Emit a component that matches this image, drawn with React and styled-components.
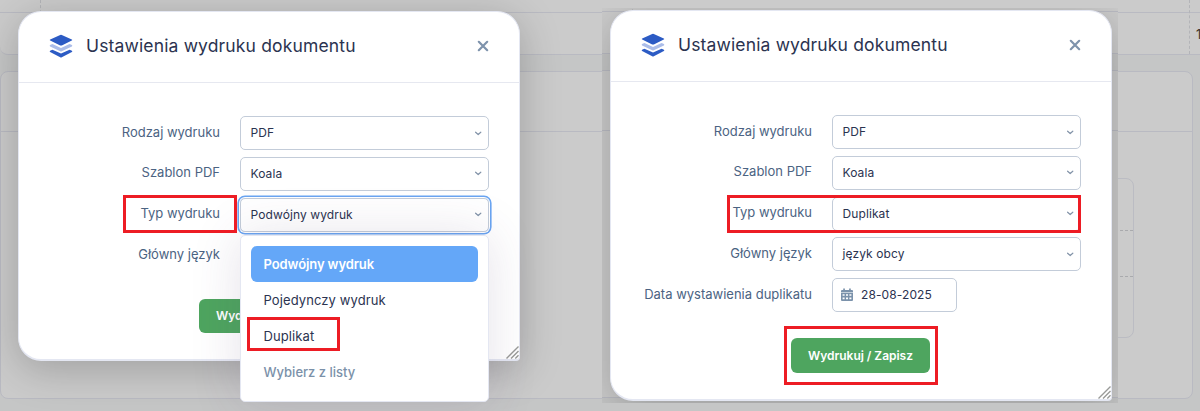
import styled, { createGlobalStyle, css } from "styled-components";

const GlobalStyle = createGlobalStyle`
  * { box-sizing: border-box; }
  body {
    margin: 0;
    overflow: hidden;
    font-family: Inter, "Liberation Sans", sans-serif;
    font-size: 13px;
    color: #2b3350;
  }
`;

const LayersIcon = () => (
  <svg width="24" height="24" viewBox="0 0 24 24">
    <path d="M11.2 .9Q12 .5 12.8 .9L22.8 5.4Q23.8 5.9 22.8 6.4L12.8 11.4Q12 11.8 11.2 11.4L1.2 6.4Q.2 5.9 1.2 5.4Z" fill="#2c5bc4" />
    <path d="M1.1 12.4Q.2 11.7 1.1 11L2.8 10.2Q3.4 10 4 10.3L12 14L20 10.3Q20.6 10 21.2 10.2L22.9 11Q23.8 11.7 22.9 12.4L12.8 17.3Q12 17.7 11.2 17.3Z" fill="#abbde9" />
    <path d="M1.1 18.1Q.2 17.4 1.1 16.7L2.8 15.9Q3.4 15.7 4 16L12 19.6L20 16Q20.6 15.7 21.2 15.9L22.9 16.7Q23.8 17.4 22.9 18.1L12.8 23.2Q12 23.6 11.2 23.2Z" fill="#2c5bc4" />
  </svg>
);

const CloseIcon = () => (
  <svg width="12" height="12" viewBox="0 0 12 12" fill="none" stroke="#7e93ac" strokeWidth="2.2" strokeLinecap="round">
    <path d="M1.8 1.8L10.2 10.2M10.2 1.8L1.8 10.2" />
  </svg>
);

const ChevronIcon = () => (
  <svg width="8" height="6" viewBox="0 0 8 6" fill="none" stroke="#8293a8" strokeWidth="1.2" strokeLinecap="round" strokeLinejoin="round">
    <path d="M1.6 2.2L4.2 4.5L6.8 2.2" />
  </svg>
);

const CalendarIcon = () => (
  <svg width="12" height="14" viewBox="0 0 12 14">
    <path d="M2.2.5h1.7v1.5h4.2V.5h1.7v1.5H11a1 1 0 0 1 1 1v1.3H0V3a1 1 0 0 1 1-1h1.2z" fill="#7b92ab" />
    <path fillRule="evenodd" d="M0 4.8h12v7.2a1 1 0 0 1-1 1H1a1 1 0 0 1-1-1zM1.6 6.2v1.6h2V6.2zM5 6.2v1.6h2V6.2zM8.4 6.2v1.6h2V6.2zM1.6 9.6v1.6h2V9.6zM5 9.6v1.6h2V9.6zM8.4 9.6v1.6h2V9.6z" fill="#7b92ab" />
  </svg>
);

const ResizeIcon = () => (
  <svg width="13" height="13" viewBox="0 0 13 13" stroke="#999a98" strokeWidth="1.4">
    <path d="M.5 12.5L12.5 .5M5 12.5L12.5 5M9.3 12.5L12.5 9.3" />
  </svg>
);

const Backdrop = ({ label }) => (
  <Page>
    <TopPanel>
      <TopLine />
      <TopCells>
        <Cell $width={41} />
        <Cell $width={1149} />
        <Amount>{label}</Amount>
      </TopCells>
    </TopPanel>
    <MainPanel>
      <PanelHeader />
      <Card>
        <CardRow $height={52} />
        <CardRow $height={46} />
      </Card>
    </MainPanel>
  </Page>
);

const SelectField = ({ label, value, focused }) => (
  <Field>
    <Label>{label}</Label>
    <Select $focused={focused}>
      {value}
      <ChevronIcon />
    </Select>
  </Field>
);

const PrintModal = ({ left, top, height, children }) => (
  <Modal $left={left} $top={top} $height={height}>
    <Header>
      <LayersIcon />
      <Title>Ustawienia wydruku dokumentu</Title>
      <CloseIcon />
    </Header>
    {children}
    <Resize><ResizeIcon /></Resize>
  </Modal>
);

const App = () => {
  return (
    <Screen>
      <GlobalStyle />
      <Backdrop label="1" />
      <PrintModal left={18} top={11} height={350}>
        <Form>
          <SelectField label="Rodzaj wydruku" value="PDF" />
          <SelectField label="Szablon PDF" value="Koala" />
          <SelectField label="Typ wydruku" value="Podwójny wydruk" focused />
          <Field><Label>Główny język</Label></Field>
        </Form>
        <Footer $gap={27}><Button $height={34}>Wydrukuj / Zapisz</Button></Footer>
      </PrintModal>
      <Menu>
        <Option $active>Podwójny wydruk</Option>
        <Option>Pojedynczy wydruk</Option>
        <Option>Duplikat</Option>
        <Option $muted>Wybierz z listy</Option>
      </Menu>

      <Snapshot>
        <Shifted><Backdrop /></Shifted>
        <PrintModal left={8} top={2} height={391}>
          <Form>
            <SelectField label="Rodzaj wydruku" value="PDF" />
            <SelectField label="Szablon PDF" value="Koala" />
            <SelectField label="Typ wydruku" value="Duplikat" />
            <SelectField label="Główny język" value="język obcy" />
            <Field>
              <Label>Data wystawienia duplikatu</Label>
              <DateInput><CalendarIcon />28-08-2025</DateInput>
            </Field>
          </Form>
          <Footer $gap={26}><Button $height={35}>Wydrukuj / Zapisz</Button></Footer>
        </PrintModal>
      </Snapshot>

      <Mark $x={123} $y={195} $w={114} $h={38} />
      <Mark $x={247} $y={317} $w={93} $h={34} />
      <Mark $x={727} $y={195} $w={354} $h={38} />
      <Mark $x={784} $y={326} $w={154} $h={59} />
    </Screen>
  );
};

const Screen = styled.main`
  position: relative;
  width: 1200px;
  height: 411px;
  overflow: hidden;
`;

const Page = styled.div`
  width: 1200px;
  height: 411px;
  background: #c5c6c6;
  overflow: hidden;
`;

const TopPanel = styled.div`
  height: 55px;
  background: #cbcbcb;
  border-bottom: 1px solid #b9bac2;
  border-bottom-left-radius: 8px;
`;

const TopLine = styled.div`
  height: 13px;
  margin-bottom: -13px;
  border-bottom: 1px solid #b9bac2;
`;

const TopCells = styled.div`
  display: flex;
  height: 54px;
`;

const Cell = styled.div`
  flex: none;
  width: ${(p) => p.$width}px;
  border-right: 1px dashed #b3b4b8;
`;

const Amount = styled.span`
  padding: 26px 0 0 6px;
  color: #3f3428;
`;

const MainPanel = styled.section`
  width: 1193px;
  height: 328px;
  margin-top: 16px;
  background: #cbcbcb;
  border: 1px solid #b9bac2;
  border-radius: 8px;
`;

const PanelHeader = styled.div`
  height: 60px;
  border-bottom: 1px solid #b9bac2;
`;

const Card = styled.div`
  width: 334px;
  height: 160px;
  margin: 46px 0 0 799px;
  border: 1px solid #bbbcc3;
  border-radius: 8px;
`;

const CardRow = styled.div`
  height: ${(p) => p.$height}px;
  border-bottom: 1px dashed #a9aaad;
`;

const Snapshot = styled.div`
  position: absolute;
  left: 602px;
  top: 8px;
  width: 516px;
  height: 395px;
  overflow: hidden;
`;

const Shifted = styled.div`
  margin: -9px 0 0 -10px;
`;

const Modal = styled.section`
  position: absolute;
  left: ${(p) => p.$left}px;
  top: ${(p) => p.$top}px;
  width: 502px;
  height: ${(p) => p.$height}px;
  background: #fff;
  border: 1px solid #e4e7f2;
  border-bottom-width: 2px;
  border-radius: 23px 23px 4px 23px;
  box-shadow: 0 8px 42px rgba(0, 0, 0, 0.22);
`;

const Header = styled.header`
  display: flex;
  align-items: center;
  height: 71px;
  padding: 0 30px 2px;
  border-bottom: 1px solid #e6e8f0;
`;

const Title = styled.h1`
  flex: 1;
  margin: 0 0 0 13px;
  padding-bottom: 1px;
  font-size: 17.5px;
  font-weight: 400;
  letter-spacing: 0.15px;
`;

const Form = styled.div`
  display: flex;
  flex-direction: column;
  gap: 6.75px;
  padding-top: 33px;
`;

const Field = styled.div`
  display: flex;
  align-items: center;
  gap: 20px;
  height: 34px;
`;

const Label = styled.label`
  width: 201px;
  padding-bottom: 3px;
  text-align: right;
  color: #4b6382;
`;

const Control = css`
  display: flex;
  align-items: center;
  height: 34px;
  padding-bottom: 1px;
  border: 1px solid #c3ccd9;
  border-radius: 5px;
  background: #fff;
  font-size: 12px;
`;

const Select = styled.div`
  ${Control}
  justify-content: space-between;
  width: 249px;
  padding-left: 9.5px;
  padding-right: 6px;
  letter-spacing: 0.1px;
  ${(p) => p.$focused && css`
    background: transparent;
    box-shadow: 0 0 0 1px #fff, 0 0 0 2.6px #6aa5f2;
  `}
`;

const DateInput = styled.div`
  ${Control}
  width: 125px;
  gap: 8px;
  padding-left: 8px;
  letter-spacing: 0.1px;
`;

const Footer = styled.footer`
  display: flex;
  justify-content: center;
  padding-top: ${(p) => p.$gap}px;
  padding-right: 2px;
`;

const Button = styled.button`
  width: 139px;
  height: ${(p) => p.$height}px;
  padding: 0 0 1px 1px;
  border: 0;
  border-radius: 6px;
  background: #4ea55f;
  color: #fff;
  font: 600 12px Inter, sans-serif;
  letter-spacing: -0.03px;
`;

const Resize = styled.span`
  position: absolute;
  right: 0;
  bottom: 0;
  line-height: 0;
`;

const Menu = styled.ul`
  position: absolute;
  left: 240px;
  top: 235px;
  width: 249px;
  height: 167px;
  margin: 0;
  padding: 10px;
  list-style: none;
  background: #fff;
  border: 1px solid #e4e7f2;
  border-radius: 5px;
  box-shadow: 0 0 50px rgba(82, 63, 105, 0.15);
`;

const Option = styled.li`
  display: flex;
  align-items: center;
  height: 36px;
  padding-left: 12.5px;
  border-radius: 6px;
  letter-spacing: 0.1px;
  ${(p) => p.$muted && css`
    color: #7b91a9;
    font-weight: 500;
    letter-spacing: 0;
  `}
  ${(p) => p.$active && css`
    background: #64a7f8;
    color: #fff;
    font-weight: 600;
    letter-spacing: -0.1px;
  `}
`;

const Mark = styled.span`
  position: absolute;
  left: ${(p) => p.$x}px;
  top: ${(p) => p.$y}px;
  width: ${(p) => p.$w}px;
  height: ${(p) => p.$h}px;
  border: 3px solid #ed1c24;
`;

export default App;
